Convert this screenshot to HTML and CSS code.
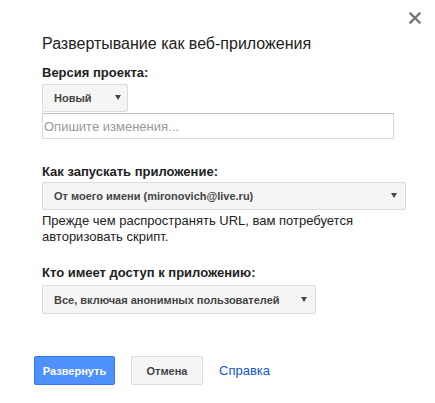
FILE: index.html
```html
<!DOCTYPE html>
<html lang="ru">
<head>
<meta charset="utf-8">
<title>Развертывание как веб-приложения</title>
<link rel="stylesheet" href="styles.css">
</head>
<body>
<div class="dialog">
  <div class="close-row">
    <svg class="close" width="12" height="12" viewBox="0 0 12 12" aria-label="Закрыть">
      <path d="M1.5 1.5 L10.5 10.5 M10.5 1.5 L1.5 10.5" stroke="#777" stroke-width="2.4" stroke-linecap="square" fill="none"/>
    </svg>
  </div>
  <h1 class="title">Развертывание как веб-приложения</h1>

  <div class="label label-first">Версия проекта:</div>
  <div class="select select-version"><span>Новый</span><span class="arrow"></span></div>
  <div class="input"><span class="placeholder">Опишите изменения...</span></div>

  <div class="label label-run">Как запускать приложение:</div>
  <div class="select select-run"><span>От моего имени (mironovich@live.ru)</span><span class="arrow"></span></div>
  <p class="note">Прежде чем распространять URL, вам потребуется авторизовать скрипт.</p>

  <div class="label label-access">Кто имеет доступ к приложению:</div>
  <div class="select select-access"><span>Все, включая анонимных пользователей</span><span class="arrow"></span></div>

  <div class="actions">
    <button class="btn btn-primary">Развернуть</button>
    <button class="btn btn-default">Отмена</button>
    <a class="link" href="#">Справка</a>
  </div>
</div>
</body>
</html>
```
FILE: styles.css
```css
* { box-sizing: border-box; }
html, body { margin: 0; padding: 0; background: #fff; }
body {
  font-family: "Liberation Sans", Arial, sans-serif;
  color: #222;
  width: 435px;
  height: 403px;
  overflow: hidden;
}
.dialog {
  padding: 12px 14px 0 42px;
}
.close-row {
  display: flex;
  justify-content: flex-end;
  height: 12px;
}
.close { display: block; }
.title {
  margin: 10px 0 0 0;
  font-size: 16px;
  font-weight: normal;
  line-height: 20px;
  color: #222;
}
.label {
  font-size: 13px;
  font-weight: bold;
  line-height: 16px;
  color: #222;
}
.label-first { margin-top: 11px; }
.label-run { margin-top: 25px; }
.label-access { margin-top: 20px; }
.select {
  display: flex;
  align-items: center;
  justify-content: space-between;
  height: 28px;
  padding: 0 8px 0 11px;
  background: #f5f5f5;
  border: 1px solid #dcdcdc;
  border-radius: 2px;
  font-size: 11px;
  font-weight: bold;
  color: #444;
}
.arrow {
  width: 0;
  height: 0;
  border-left: 3px solid transparent;
  border-right: 3px solid transparent;
  border-top: 5px solid #444;
  margin-top: -1px;
}
.select-version { width: 86px; margin-top: 3px; padding-right: 6px; }
.select-run { width: 364px; margin-top: 2px; }
.select-access { width: 274px; margin-top: 4px; height: 29px; }
.input {
  width: 352px;
  height: 26px;
  margin-top: 1px;
  border: 1px solid #d9d9d9;
  border-top-color: #c0c0c0;
  padding-left: 1px;
  display: flex;
  align-items: center;
  font-size: 13px;
}
.placeholder { color: #999; }
.note {
  margin: 3px 0 0 0;
  font-size: 13px;
  line-height: 16px;
  color: #222;
  width: 340px;
}
.actions {
  display: flex;
  align-items: center;
  gap: 16px;
  margin: 42px 0 0 -8px;
}
.btn {
  height: 29px;
  border-radius: 2px;
  font-family: "Liberation Sans", Arial, sans-serif;
  font-size: 11px;
  font-weight: bold;
  padding: 0;
  margin: 0;
}
.btn-primary {
  width: 81px;
  background: #4d90fe;
  border: 1px solid #3079ed;
  color: #fff;
}
.btn-default {
  width: 72px;
  background: #f5f5f5;
  border: 1px solid #dcdcdc;
  color: #444;
}
.link {
  font-size: 13px;
  color: #15c;
  text-decoration: none;
}
```
